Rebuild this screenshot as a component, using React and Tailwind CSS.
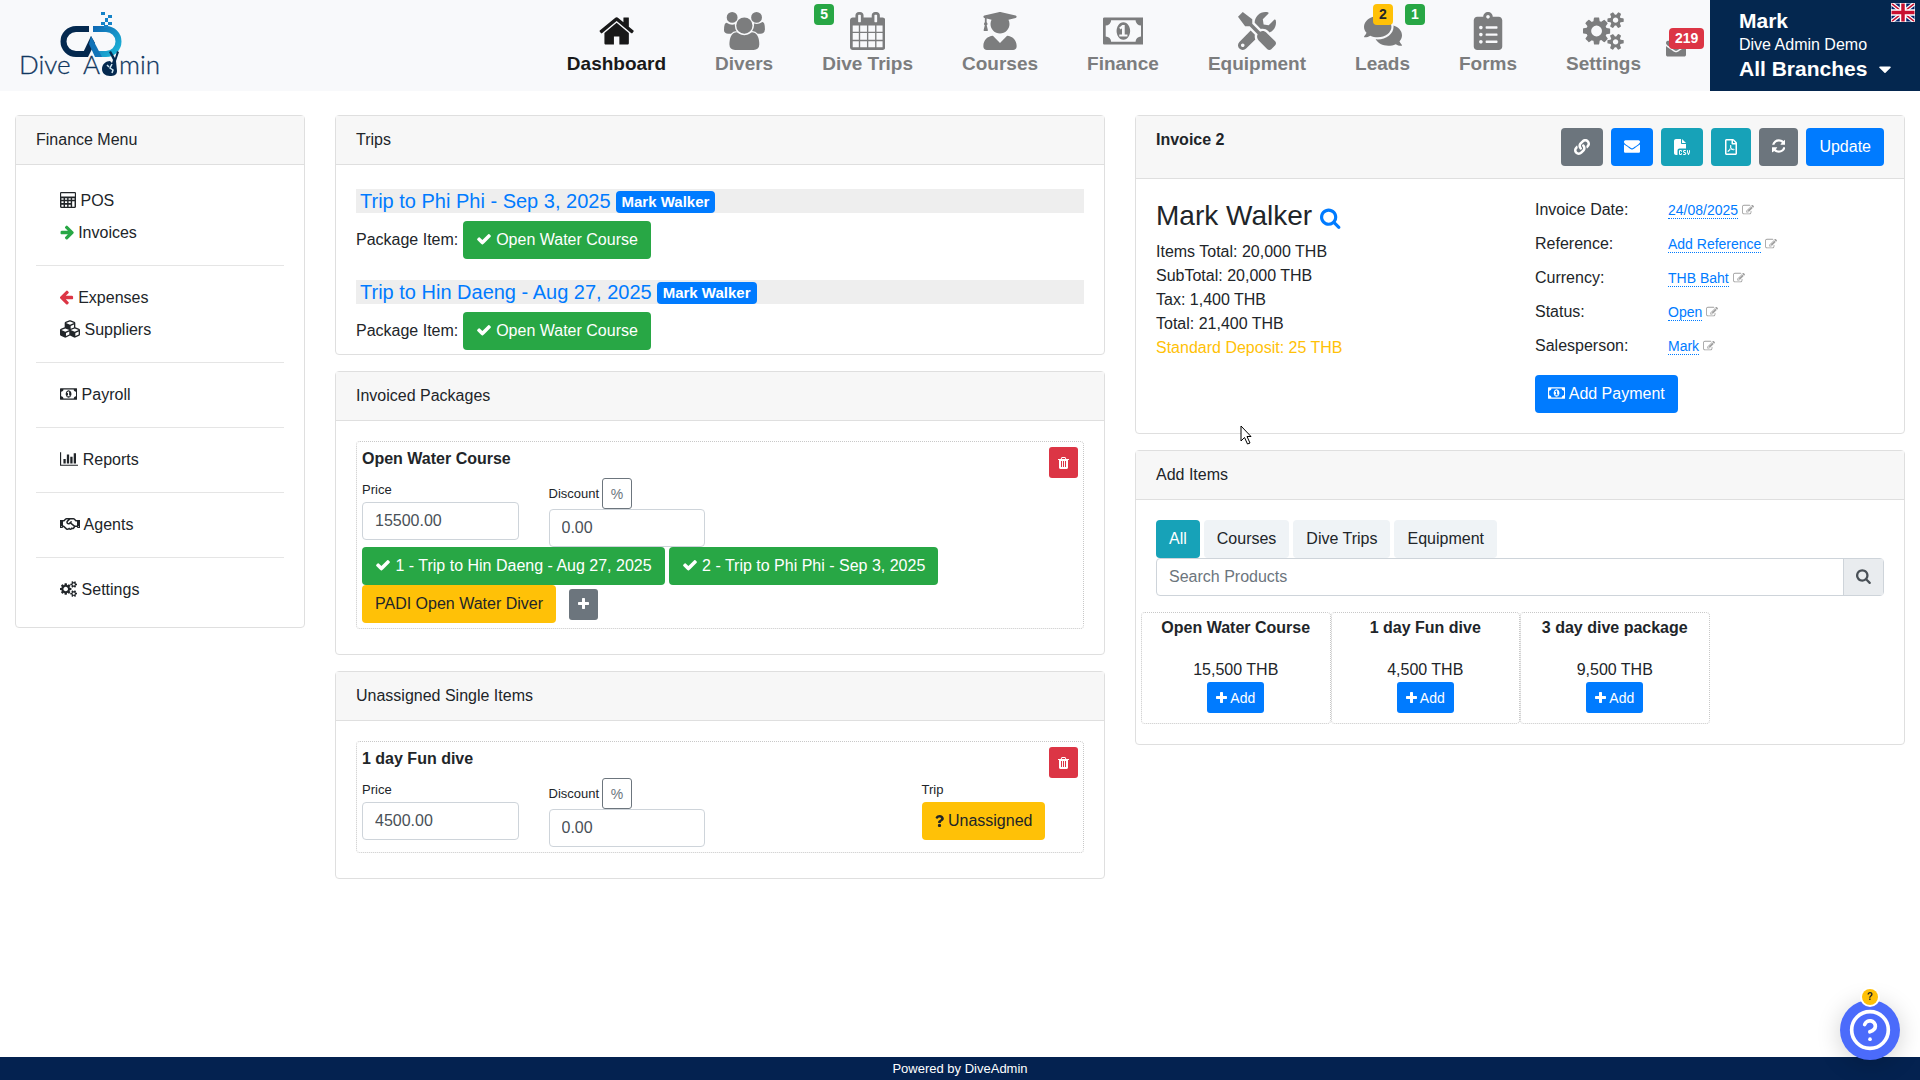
import { useState } from 'react';
import { CircleHelp } from 'lucide-react';
import {
  FaCaretDown,
  FaClipboardList,
  FaComments,
  FaCubes,
  FaLink,
  FaQuestion,
  FaRegFilePdf,
  FaRegHandshake,
  FaTools,
  FaUserGraduate,
} from 'react-icons/fa';
import { FaFileCsv } from 'react-icons/fa6';

// Font Awesome 4 glyphs, each with the x offset and width of its box
const glyphs = {
  home: ['64 0 1664 1792', 'M1472 992v480q0 26-19 45t-45 19h-384v-384h-256v384h-384q-26 0-45-19t-19-45v-480q0-1 .5-3t.5-3l575-474 575 474q1 2 1 6zm223-69l-62 74q-8 9-21 11h-3q-13 0-21-7l-692-577-692 577q-12 8-24 7-13-2-21-11l-62-74q-8-10-7-23.5t11-21.5l719-599q32-26 76-26t76 26l244 204v-195q0-14 9-23t23-9h192q14 0 23 9t9 23v408l219 182q10 8 11 21.5t-7 23.5z'],
  users: ['0 0 1920 1792', 'M593 896q-162 5-265 128h-134q-82 0-138-40.5t-56-118.5q0-353 124-353 6 0 43.5 21t97.5 42.5 119 21.5q67 0 133-23-5 37-5 66 0 159 93 293zm1071 637q0 120-73 189.5t-194 69.5h-874q-121 0-194-69.5t-73-189.5q0-53 3.5-103.5t14-109 26.5-108.5 43-97.5 62-81 85.5-53.5 111.5-20q10 0 43 21.5t73 48 107 48 135 21.5 135-21.5 107-48 73-48 43-21.5q61 0 111.5 20t85.5 53.5 62 81 43 97.5 26.5 108.5 14 109 3.5 103.5zm-1024-1277q0 106-75 181t-181 75-181-75-75-181 75-181 181-75 181 75 75 181zm704 384q0 159-112.5 271.5t-271.5 112.5-271.5-112.5-112.5-271.5 112.5-271.5 271.5-112.5 271.5 112.5 112.5 271.5zm576 225q0 78-56 118.5t-138 40.5h-134q-103-123-265-128 93-134 93-293 0-29-5-66 66 23 133 23 59 0 119-21.5t97.5-42.5 43.5-21q124 0 124 353zm-128-609q0 106-75 181t-181 75-181-75-75-181 75-181 181-75 181 75 75 181z'],
  calendar: ['64 0 1664 1792', 'M192 1664h288v-288h-288v288zm352 0h320v-288h-320v288zm-352-352h288v-320h-288v320zm352 0h320v-320h-320v320zm-352-384h288v-288h-288v288zm736 736h320v-288h-320v288zm-384-736h320v-288h-320v288zm768 736h288v-288h-288v288zm-384-352h320v-320h-320v320zm-352-864v-288q0-13-9.5-22.5t-22.5-9.5h-64q-13 0-22.5 9.5t-9.5 22.5v288q0 13 9.5 22.5t22.5 9.5h64q13 0 22.5-9.5t9.5-22.5zm736 864h288v-320h-288v320zm-384-384h320v-288h-320v288zm384 0h288v-288h-288v288zm32-480v-288q0-13-9.5-22.5t-22.5-9.5h-64q-13 0-22.5 9.5t-9.5 22.5v288q0 13 9.5 22.5t22.5 9.5h64q13 0 22.5-9.5t9.5-22.5zm384-64v1280q0 52-38 90t-90 38h-1408q-52 0-90-38t-38-90v-1280q0-52 38-90t90-38h128v-96q0-66 47-113t113-47h64q66 0 113 47t47 113v96h384v-96q0-66 47-113t113-47h64q66 0 113 47t47 113v96h128q52 0 90 38t38 90z'],
  money: ['0 0 1920 1792', 'M768 1152h384v-96h-128v-448h-114l-148 137 77 80q42-37 55-57h2v288h-128v96zm512-256q0 70-21 142t-59.5 134-101.5 101-138 39-138-39-101.5-101-59.5-134-21-142 21-142 59.5-134 101.5-101 138-39 138 39 101.5 101 59.5 134 21 142zm512 256v-512q-106 0-181-75t-75-181h-1152q0 106-75 181t-181 75v512q106 0 181 75t75 181h1152q0-106 75-181t181-75zm128-832v1152q0 26-19 45t-45 19h-1792q-26 0-45-19t-19-45v-1152q0-26 19-45t45-19h1792q26 0 45 19t19 45z'],
  cogs: ['0 0 1920 1792', 'M896 896q0-106-75-181t-181-75-181 75-75 181 75 181 181 75 181-75 75-181zm768 512q0-52-38-90t-90-38-90 38-38 90q0 53 37.5 90.5t90.5 37.5 90.5-37.5 37.5-90.5zm0-1024q0-52-38-90t-90-38-90 38-38 90q0 53 37.5 90.5t90.5 37.5 90.5-37.5 37.5-90.5zm-384 421v185q0 10-7 19.5t-16 10.5l-155 24q-11 35-32 76 34 48 90 115 7 11 7 20 0 12-7 19-23 30-82.5 89.5t-78.5 59.5q-11 0-21-7l-115-90q-37 19-77 31-11 108-23 155-7 24-30 24h-186q-11 0-20-7.5t-10-17.5l-23-153q-34-10-75-31l-118 89q-7 7-20 7-11 0-21-8-144-133-144-160 0-9 7-19 10-14 41-53t47-61q-23-44-35-82l-152-24q-10-1-17-9.5t-7-19.5v-185q0-10 7-19.5t16-10.5l155-24q11-35 32-76-34-48-90-115-7-11-7-20 0-12 7-20 22-30 82-89t79-59q11 0 21 7l115 90q34-18 77-32 11-108 23-154 7-24 30-24h186q11 0 20 7.5t10 17.5l23 153q34 10 75 31l118-89q8-7 20-7 11 0 21 8 144 133 144 160 0 8-7 19-12 16-42 54t-45 60q23 48 34 82l152 23q10 2 17 10.5t7 19.5zm640 533v140q0 16-149 31-12 27-30 52 51 113 51 138 0 4-4 7-122 71-124 71-8 0-46-47t-52-68q-20 2-30 2t-30-2q-14 21-52 68t-46 47q-2 0-124-71-4-3-4-7 0-25 51-138-18-25-30-52-149-15-149-31v-140q0-16 149-31 13-29 30-52-51-113-51-138 0-4 4-7 4-2 35-20t59-34 30-16q8 0 46 46.5t52 67.5q20-2 30-2t30 2q51-71 92-112l6-2q4 0 124 70 4 3 4 7 0 25-51 138 17 23 30 52 149 15 149 31zm0-1024v140q0 16-149 31-12 27-30 52 51 113 51 138 0 4-4 7-122 71-124 71-8 0-46-47t-52-68q-20 2-30 2t-30-2q-14 21-52 68t-46 47q-2 0-124-71-4-3-4-7 0-25 51-138-18-25-30-52-149-15-149-31v-140q0-16 149-31 13-29 30-52-51-113-51-138 0-4 4-7 4-2 35-20t59-34 30-16q8 0 46 46.5t52 67.5q20-2 30-2t30 2q51-71 92-112l6-2q4 0 124 70 4 3 4 7 0 25-51 138 17 23 30 52 149 15 149 31z'],
  check: ['0 0 1792 1792', 'M1671 566q0 40-28 68l-724 724-136 136q-28 28-68 28t-68-28l-136-136-362-362q-28-28-28-68t28-68l136-136q28-28 68-28t68 28l294 295 656-657q28-28 68-28t68 28l136 136q28 28 28 68z'],
  plus: ['192 0 1408 1792', 'M1600 736v192q0 40-28 68t-68 28h-416v416q0 40-28 68t-68 28h-192q-40 0-68-28t-28-68v-416h-416q-40 0-68-28t-28-68v-192q0-40 28-68t68-28h416v-416q0-40 28-68t68-28h192q40 0 68 28t28 68v416h416q40 0 68 28t28 68z'],
  search: ['64 0 1664 1792', 'M1216 832q0-185-131.5-316.5t-316.5-131.5-316.5 131.5-131.5 316.5 131.5 316.5 316.5 131.5 316.5-131.5 131.5-316.5zm512 832q0 52-38 90t-90 38q-54 0-90-38l-343-342q-179 124-399 124-143 0-273.5-55.5t-225-150-150-225-55.5-273.5 55.5-273.5 150-225 225-150 273.5-55.5 273.5 55.5 225 150 150 225 55.5 273.5q0 220-124 399l343 343q37 37 37 90z'],
  trash: ['192 0 1408 1792', 'M704 1376v-704q0-14-9-23t-23-9h-64q-14 0-23 9t-9 23v704q0 14 9 23t23 9h64q14 0 23-9t9-23zm256 0v-704q0-14-9-23t-23-9h-64q-14 0-23 9t-9 23v704q0 14 9 23t23 9h64q14 0 23-9t9-23zm256 0v-704q0-14-9-23t-23-9h-64q-14 0-23 9t-9 23v704q0 14 9 23t23 9h64q14 0 23-9t9-23zm-544-992h448l-48-117q-7-9-17-11h-317q-10 2-17 11zm928 32v64q0 14-9 23t-23 9h-96v948q0 83-47 143.5t-113 60.5h-832q-66 0-113-58.5t-47-141.5v-952h-96q-14 0-23-9t-9-23v-64q0-14 9-23t23-9h309l70-167q15-37 54-63t79-26h320q40 0 79 26t54 63l70 167h309q14 0 23 9t9 23z'],
  envelope: ['0 0 1792 1792', 'M1792 710v794q0 66-47 113t-113 47h-1472q-66 0-113-47t-47-113v-794q44 49 101 87 362 246 497 345 57 42 92.5 65.5t94.5 48 110 24.5h2q51 0 110-24.5t94.5-48 92.5-65.5q170-123 498-345 57-39 100-87zm0-294q0 79-49 151t-122 123q-376 261-468 325-10 7-42.5 31t-54 38.5-52 32.5-57.5 27-50 9h-2q-23 0-50-9t-57.5-27-52-32.5-54-38.5-42.5-31q-91-64-262-182.5t-205-142.5q-62-42-117-115.5t-55-136.5q0-78 41.5-130t118.5-52h1472q65 0 112.5 47t47.5 113z'],
  refresh: ['128 0 1536 1792', 'M1639 1056q0 5-1 7-64 268-268 434.5t-478 166.5q-146 0-282.5-55t-243.5-157l-129 129q-19 19-45 19t-45-19-19-45v-448q0-26 19-45t45-19h448q26 0 45 19t19 45-19 45l-137 137q71 66 161 102t187 36q134 0 250-65t186-179q11-17 53-117 8-23 30-23h192q13 0 22.5 9.5t9.5 22.5zm25-800v448q0 26-19 45t-45 19h-448q-26 0-45-19t-19-45 19-45l138-138q-148-137-349-137-134 0-250 65t-186 179q-11 17-53 117-8 23-30 23h-199q-13 0-22.5-9.5t-9.5-22.5v-7q65-268 270-434.5t480-166.5q146 0 284 55.5t245 156.5l130-129q19-19 45-19t45 19 19 45z'],
  edit: ['0 0 1792 1792', 'M888 1184l116-116-152-152-116 116v56h96v96h56zm440-720q-16-16-33 1l-350 350q-17 17-1 33t33-1l350-350q17-17 1-33zm80 594v190q0 119-84.5 203.5t-203.5 84.5h-832q-119 0-203.5-84.5t-84.5-203.5v-832q0-119 84.5-203.5t203.5-84.5h832q63 0 117 25 15 7 18 23 3 17-9 29l-49 49q-14 14-32 8-23-6-45-6h-832q-66 0-113 47t-47 113v832q0 66 47 113t113 47h832q66 0 113-47t47-113v-126q0-13 9-22l64-64q15-15 35-7t20 29zm-96-738l288 288-672 672h-288v-288zm444 132l-92 92-288-288 92-92q28-28 68-28t68 28l152 152q28 28 28 68t-28 68z'],
  arrowRight: ['64 0 1536 1792', 'M1600 960q0 54-37 91l-651 651q-39 37-91 37-51 0-90-37l-75-75q-38-38-38-91t38-91l293-293h-704q-52 0-84.5-37.5t-32.5-90.5v-128q0-53 32.5-90.5t84.5-37.5h704l-293-294q-38-36-38-90t38-90l75-75q38-38 90-38 53 0 91 38l651 651q37 35 37 90z'],
  chart: ['0 0 2048 1792', 'M640 896v512h-256v-512h256zm384-512v1024h-256v-1024h256zm1024 1152v128h-2048v-1536h128v1408h1920zm-640-896v768h-256v-768h256zm384-384v1152h-256v-1152h256z'],
  calculator: ['0 0 1792 1792', 'M128 0H1664Q1792 0 1792 128V1664Q1792 1792 1664 1792H128Q0 1792 0 1664V128Q0 0 128 0ZM128 128V512H1664V128ZM160 688V880H400V688ZM560 688V880H800V688ZM960 688V880H1200V688ZM1360 688V880H1630V688ZM160 1040V1240H400V1040ZM560 1040V1240H800V1040ZM960 1040V1240H1200V1040ZM1360 1040V1640H1630V1040ZM160 1420V1640H400V1420ZM560 1420V1640H800V1420ZM960 1420V1640H1200V1420Z'],
};

function Icon({ name, className = 'h-4 align-[-2px]' }) {
  const [viewBox, d] = glyphs[name];
  return (
    <svg viewBox={viewBox} aria-hidden="true" fill="currentColor" fillRule={name === 'calculator' ? 'evenodd' : 'nonzero'} className={`inline-block w-auto ${className}`}>
      <path d={d} />
    </svg>
  );
}

const navIcon = 'h-[38px]';

const navItems = [
  { label: 'Dashboard', icon: <Icon name="home" className={navIcon} />, active: true },
  { label: 'Divers', icon: <Icon name="users" className={navIcon} /> },
  { label: 'Dive Trips', icon: <Icon name="calendar" className={navIcon} />, badges: [{ text: '5', className: 'left-4 bg-[#28a745] text-white' }] },
  { label: 'Courses', icon: <FaUserGraduate size={38} /> },
  { label: 'Finance', icon: <Icon name="money" className={navIcon} /> },
  { label: 'Equipment', icon: <FaTools size={38} /> },
  {
    label: 'Leads',
    icon: <FaComments size={38} />,
    badges: [
      { text: '2', className: 'left-[42px] bg-[#ffc107] text-[#212529]' },
      { text: '1', className: 'left-[74px] bg-[#28a745] text-white' },
    ],
  },
  { label: 'Forms', icon: <FaClipboardList size={38} /> },
  { label: 'Settings', icon: <Icon name="cogs" className={navIcon} /> },
];

const menuGroups = [
  [
    { label: 'POS', icon: <Icon name="calculator" /> },
    { label: 'Invoices', icon: <Icon name="arrowRight" className="h-4 align-[-2px] text-[#28a745]" /> },
  ],
  [
    { label: 'Expenses', icon: <Icon name="arrowRight" className="h-4 align-[-2px] -scale-x-100 text-[#dc3545]" /> },
    { label: 'Suppliers', icon: <FaCubes size={20} className="inline-block align-[-4px]" /> },
  ],
  [{ label: 'Payroll', icon: <Icon name="money" /> }],
  [{ label: 'Reports', icon: <Icon name="chart" /> }],
  [{ label: 'Agents', icon: <FaRegHandshake size={20} className="inline-block align-[-4px]" /> }],
  [{ label: 'Settings', icon: <Icon name="cogs" /> }],
];

const trips = ['Trip to Phi Phi - Sep 3, 2025', 'Trip to Hin Daeng - Aug 27, 2025'];

const totals = ['Items Total: 20,000 THB', 'SubTotal: 20,000 THB', 'Tax: 1,400 THB', 'Total: 21,400 THB'];

const invoiceFields = [
  ['Invoice Date:', '24/08/2025'],
  ['Reference:', 'Add Reference'],
  ['Currency:', 'THB Baht'],
  ['Status:', 'Open'],
  ['Salesperson:', 'Mark'],
];

const products = [
  { name: 'Open Water Course', price: '15,500 THB' },
  { name: '1 day Fun dive', price: '4,500 THB' },
  { name: '3 day dive package', price: '9,500 THB' },
];

const variants = {
  primary: 'bg-[#007bff] text-white',
  success: 'bg-[#28a745] text-white',
  info: 'bg-[#17a2b8] text-white',
  warning: 'bg-[#ffc107] text-[#212529]',
  secondary: 'bg-[#6c757d] text-white',
  danger: 'bg-[#dc3545] text-white',
  light: 'bg-[#eff3f6] text-[#212529]',
};

function Button({ variant = 'primary', small, children, ...props }) {
  const size = small ? 'h-[31px] px-[9px] text-sm rounded-[3px]' : 'h-[38px] px-[13px] text-base rounded';
  return (
    <button type="button" className={`whitespace-nowrap ${size} ${variants[variant]}`} {...props}>
      {children}
    </button>
  );
}

function Logo() {
  return (
    <svg viewBox="0 0 150 74" role="img" aria-label="Dive Admin" className="h-[74px] w-[150px]">
      <defs>
        <linearGradient id="mask" x1="0" y1="0" x2="1" y2="1">
          <stop offset="0" stopColor="#0f6ab4" />
          <stop offset="1" stopColor="#1cb5d8" />
        </linearGradient>
      </defs>
      <path d="M72 24H59a12.500 12.500 0 0 0 0 25h8" fill="none" stroke="#04294f" strokeWidth="6" />
      <path d="M64 52l10-21 4 7-7 14z" fill="#04294f" />
      <path d="M76 24h13a12.500 12.500 0 0 1 0 25H80" fill="none" stroke="url(#mask)" strokeWidth="6" />
      <path d="M74 31l11 21h-7l-6-13z" fill="#1173b8" />
      <g fill="#1583c8">
        <path d="M84 7h4v3h-4zM91 10h4v3h-4zM88 13h3v4h-3zM84 17h4v3h-4zM91 17h4v3h-4zM87 20h4v3h-4z" />
      </g>
      <g fill="#10375f" stroke="#10375f" strokeWidth="0.300" fontSize="26" className="font-[Lato] font-light">
        <text x="2" y="69">Dive</text>
        <text x="66" y="69">A</text>
        <text x="102" y="69">min</text>
      </g>
      <path d="M94 46l4 7 2-7 2 1-3 9 1 10c0 4-3 5-7 5-5 0-8-3-8-7 0-5 4-8 8-8l2 2 1-3-4-8z" fill="#04294f" />
      <path d="M95 59l-2 4 3 2-1 3M90 60l2 2" fill="none" stroke="#cfe6f2" strokeWidth="1.500" />
    </svg>
  );
}

function Flag() {
  return (
    <svg viewBox="0 0 24 19" role="img" aria-label="English" className="absolute top-[3px] right-[5px] h-[19px] w-6">
      <path fill="#012169" d="M0 0h24v19H0z" />
      <path d="M0 0l24 19M24 0L0 19" stroke="#fff" strokeWidth="4" />
      <path d="M0 0l24 19M24 0L0 19" stroke="#c8102e" strokeWidth="1.500" />
      <path d="M12 0v19M0 9.500h24" stroke="#fff" strokeWidth="6.500" />
      <path d="M12 0v19M0 9.500h24" stroke="#c8102e" strokeWidth="3.500" />
      <path d="M0 0h24v19H0z" fill="none" stroke="#fff" />
    </svg>
  );
}

function Header() {
  return (
    <header className="flex h-[91px] bg-[#f8f9fb]">
      <a href="#home" className="ml-[17px] pt-[5px]"><Logo /></a>
      <nav className="ml-auto flex gap-px">
        {navItems.map((item) => (
          <a
            key={item.label}
            href="#nav"
            className={`relative flex flex-col items-center px-6 pt-3 text-[19px] leading-7 font-bold whitespace-nowrap ${item.active ? 'text-[#191919]' : 'text-[#7c7d7e]'}`}
          >
            {item.icon}
            <span>{item.label}</span>
            {item.badges?.map((badge) => (
              <span key={badge.text} className={`absolute top-1 rounded px-[6px] text-sm leading-[21px] ${badge.className}`}>{badge.text}</span>
            ))}
          </a>
        ))}
        <a href="#inbox" aria-label="Inbox" className="relative pt-[35px] pr-6 text-[#7c7d7e]">
          <Icon name="envelope" className="block h-5" />
          <span className="absolute top-7 left-[3px] rounded bg-[#dc3545] px-[6px] text-sm leading-[21px] font-bold text-white">219</span>
        </a>
      </nav>
      <button type="button" className="relative w-[210px] bg-[#04274f] pb-[2px] pl-[29px] text-left leading-6 text-white">
        <span className="block text-[21px] font-bold">Mark</span>
        <span className="block text-base">Dive Admin Demo</span>
        <span className="flex items-center gap-2 text-[21px] font-bold">
          All Branches <FaCaretDown size={20} />
        </span>
        <Flag />
      </button>
    </header>
  );
}

function Card({ title, children }) {
  return (
    <section className="mb-4 rounded border border-[#dfdfdf] bg-white">
      <h2 className="border-b border-[#dfdfdf] bg-[#f7f7f7] px-5 py-3 leading-6">{title}</h2>
      {children}
    </section>
  );
}

function FinanceMenu() {
  return (
    <Card title="Finance Menu">
      <div className="px-5 pt-5 pb-[21px]">
        {menuGroups.map((group, i) => (
          <ul key={i} className={i > 0 ? 'mt-4 border-t border-[#e5e5e5] pt-4' : ''}>
            {group.map((item) => (
              <li key={item.label} className="pl-6 leading-8">
                <a href="#menu">{item.icon} {item.label}</a>
              </li>
            ))}
          </ul>
        ))}
      </div>
    </Card>
  );
}

function Trips() {
  return (
    <Card title="Trips">
      <div className="flex flex-col gap-[21px] px-5 pt-6 pb-1">
        {trips.map((trip) => (
          <div key={trip}>
            <h3 className="mb-2 flex h-6 items-center gap-[5px] bg-[#eee] pl-1 text-xl leading-6">
              <a href="#trip" className="text-[#007bff]">{trip}</a>
              <span className="mt-[2px] rounded bg-[#007bff] px-[6px] text-[15px] leading-[22px] font-bold text-white">Mark Walker</span>
            </h3>
            Package Item: <Button variant="success"><Icon name="check" /> Open Water Course</Button>
          </div>
        ))}
      </div>
    </Card>
  );
}

const inputClass = 'block h-[38px] w-full rounded border border-[#ced4da] bg-white px-3 text-base text-[#495057]';

function ItemBox({ id, title, price, trip, children }) {
  const [priceValue, setPriceValue] = useState(price);
  const [discount, setDiscount] = useState('0.00');

  return (
    <div className="mx-5 mt-5 mb-[25px] rounded border border-dotted border-[#c8c8c8] p-[5px]">
      <div className="flex h-[31px] items-start justify-between">
        <h3 className="font-bold">{title}</h3>
        <Button variant="danger" small aria-label="Delete"><Icon name="trash" className="h-[14px] align-[-2px]" /></Button>
      </div>
      <div className="-mx-[15px] grid grid-cols-4">
        <div className="px-[15px]">
          <label htmlFor={`${id}-price`} className="block text-[13px] leading-6">Price</label>
          <input id={`${id}-price`} value={priceValue} onChange={(e) => setPriceValue(e.target.value)} className={inputClass} />
        </div>
        <div className="px-[15px]">
          <div className="flex h-[31px] items-center gap-[3px]">
            <label htmlFor={`${id}-discount`} className="text-[13px]">Discount</label>
            <button type="button" className="h-[31px] w-[30px] rounded-[3px] border border-[#6c757d] text-sm text-[#6c757d]">%</button>
          </div>
          <input id={`${id}-discount`} value={discount} onChange={(e) => setDiscount(e.target.value)} className={inputClass} />
        </div>
        {trip && (
          <div className="col-start-4 px-[15px]">
            <span className="block text-[13px] leading-6">Trip</span>
            <Button variant="warning"><FaQuestion size={12} className="inline-block w-[9px] align-[-1px]" />{' '}{trip}</Button>
          </div>
        )}
      </div>
      {children}
    </div>
  );
}

function Invoice() {
  return (
    <section className="mb-4 rounded border border-[#dfdfdf] bg-white">
      <div className="flex items-start gap-2 border-b border-[#dfdfdf] bg-[#f7f7f7] px-5 py-3">
        <h2 className="mr-auto font-bold">Invoice 2</h2>
        <Button variant="secondary" aria-label="Copy link"><FaLink size={16} /></Button>
        <Button aria-label="Email"><Icon name="envelope" /></Button>
        <Button variant="info" aria-label="CSV"><FaFileCsv size={16} /></Button>
        <Button variant="info" aria-label="PDF"><FaRegFilePdf size={16} className="w-[14px]" /></Button>
        <Button variant="secondary" aria-label="Refresh"><Icon name="refresh" /></Button>
        <Button>Update</Button>
      </div>
      <div className="-mx-[15px] grid grid-cols-2 p-5">
        <div className="px-[15px]">
          <h1 className="mb-[7px] flex items-center gap-2 text-[28px] leading-[34px]">
            Mark Walker <a href="#customer" aria-label="View customer" className="text-[#007bff]"><Icon name="search" className="block h-[22px]" /></a>
          </h1>
          {totals.map((line) => <p key={line}>{line}</p>)}
          <p className="text-[#ffc107]">Standard Deposit: 25 THB</p>
        </div>
        <div className="px-[15px]">
          <dl className="-mt-[6px] mb-3 grid grid-cols-[133px_1fr] leading-[34px]">
            {invoiceFields.map(([label, value]) => (
              <div key={label} className="contents">
                <dt>{label}</dt>
                <dd className="text-sm leading-[34px]">
                  <a href="#edit" className="border-b border-dotted border-[#007bff] text-[#007bff]">{value}</a>{' '}
                  <Icon name="edit" className="h-3 align-[-1px] text-[#a0a0a0]" />
                </dd>
              </div>
            ))}
          </dl>
          <Button><Icon name="money" /> Add Payment</Button>
        </div>
      </div>
    </section>
  );
}

function AddItems() {
  const [tab, setTab] = useState('All');

  return (
    <Card title="Add Items">
      <div className="p-5">
        <div className="flex gap-1">
          {['All', 'Courses', 'Dive Trips', 'Equipment'].map((name) => (
            <Button key={name} variant={tab === name ? 'info' : 'light'} onClick={() => setTab(name)}>{name}</Button>
          ))}
        </div>
        <div className="flex h-[38px] rounded border border-[#ced4da]">
          <input aria-label="Search Products" placeholder="Search Products" className="min-w-0 flex-1 px-3 text-base placeholder:text-[#6c757d]" />
          <button type="button" aria-label="Search" className="w-10 border-l border-[#ced4da] bg-[#e9ecef] text-[#495057]"><Icon name="search" /></button>
        </div>
        <div className="-mx-[15px] mt-4 grid grid-cols-4">
          {products.map((product) => (
            <div key={product.name} className="flex flex-col items-center rounded border border-dotted border-[#c8c8c8] pt-[3px] pb-[10px]">
              <h3 className="mb-[18px] font-bold whitespace-nowrap">{product.name}</h3>
              <p>{product.price}</p>
              <Button small><Icon name="plus" className="h-[14px] align-[-2px]" /> Add</Button>
            </div>
          ))}
        </div>
      </div>
    </Card>
  );
}

export default function App() {
  return (
    <div className="flex min-h-screen flex-col bg-white font-['Liberation_Sans',Arial,sans-serif] text-base leading-6 text-[#212529]">
      <Header />
      <main className="grid flex-1 grid-cols-12 items-start pt-6">
        <aside className="col-span-2 px-[15px]">
          <FinanceMenu />
        </aside>
        <div className="col-span-5 px-[15px]">
          <Trips />
          <Card title="Invoiced Packages">
            <ItemBox id="package" title="Open Water Course" price="15500.00">
              <div className="flex flex-wrap items-center gap-x-1">
                <Button variant="success"><Icon name="check" /> 1 - Trip to Hin Daeng - Aug 27, 2025</Button>
                <Button variant="success"><Icon name="check" /> 2 - Trip to Phi Phi - Sep 3, 2025</Button>
                <div className="flex w-full items-center gap-[13px]">
                  <Button variant="warning">PADI Open Water Diver</Button>
                  <Button variant="secondary" small aria-label="Add item"><Icon name="plus" className="h-[14px] align-[-2px]" /></Button>
                </div>
              </div>
            </ItemBox>
          </Card>
          <Card title="Unassigned Single Items">
            <ItemBox id="single" title="1 day Fun dive" price="4500.00" trip="Unassigned" />
          </Card>
        </div>
        <div className="relative col-span-5 px-[15px]">
          <Invoice />
          <AddItems />
          <svg viewBox="0 0 12 20" aria-hidden="true" className="absolute top-[310px] left-[120px] h-5 w-3">
            <path d="M1 1v15l3.500-3.500 3 6.500 2.500-1-3-6.500H11z" fill="#fff" stroke="#000" />
          </svg>
        </div>
      </main>
      <footer className="bg-[#042250] text-center text-[13px] leading-[23px] text-white">Powered by DiveAdmin</footer>
      <button type="button" aria-label="Help" className="fixed right-5 bottom-5 flex size-[60px] items-center justify-center rounded-full bg-[#4b6bfb] text-white shadow-[0_4px_24px_rgba(0,0,0,0.18)]">
        <CircleHelp size={44} />
        <span className="absolute -top-[11px] left-[22px] size-4 rounded-full bg-[#ffc107] text-[10px] leading-4 font-bold text-[#212529] ring-2 ring-white">?</span>
      </button>
    </div>
  );
}
